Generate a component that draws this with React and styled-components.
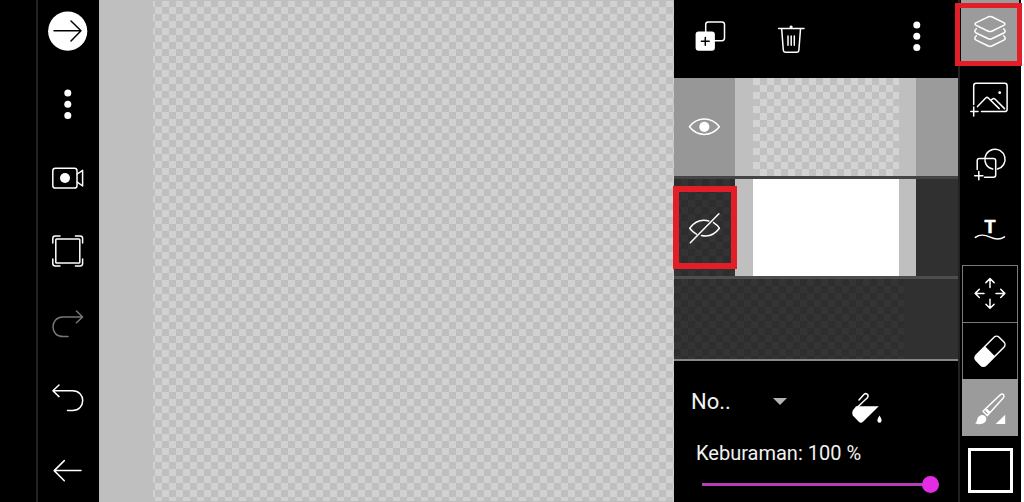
import React, { useState } from "react";
import styled, { createGlobalStyle, css } from "styled-components";

const Color = {
  black: "#000000",
  line: "#222222",
  grey: "#bfbfbf",
  active: "#9b9b9b",
  layer: "#303030",
  red: "#e41e26",
  track: "#b63db6",
  thumb: "#e32ce3",
};

// two tone transparency pattern, 7px squares
const checker = (light, dark) => css`
  background-color: ${dark};
  background-image: conic-gradient(
    ${light} 25%,
    ${dark} 0 50%,
    ${light} 0 75%,
    ${dark} 0
  );
  background-size: 14px 14px;
`;

// styles
const GlobalStyle = createGlobalStyle`
  * {
    box-sizing: border-box;
  }
  body {
    margin: 0;
    background: ${Color.black};
    font-family: Roboto, "Liberation Sans", sans-serif;
  }
`;
const Container = styled.div`
  display: flex;
  min-height: 100vh;
  background-color: ${Color.black};
  color: #f2f2f2;
`;
const LeftBar = styled.nav`
  display: flex;
  flex-direction: column;
  align-items: center;
  justify-content: space-between;
  width: 63px;
  margin-left: 36px;
  padding: 11px 1px 11px 0;
  border-left: 2px solid ${Color.line};
`;
const IconButton = styled.button`
  display: flex;
  align-items: center;
  justify-content: center;
  width: 40px;
  height: 40px;
  padding: 0;
  border: none;
  background: none;
  color: ${(props) => (props.disabled ? "#777777" : "#ffffff")};
`;
const Svg = styled.svg`
  display: block;
  flex: none;
  width: 40px;
  height: 40px;
  fill: none;
  stroke: currentColor;
  stroke-width: 1.5;
  stroke-linecap: round;
  stroke-linejoin: round;
`;
const Workspace = styled.main`
  display: flex;
  flex: 1;
  min-width: 0;
  padding: 1px 0 1px 54px;
  background-color: ${Color.grey};
`;
const Canvas = styled.div`
  flex: 1;
  ${checker("#d1d1d1", Color.grey)}
  background-position: 2px -1px;
`;
const Panel = styled.section`
  display: flex;
  flex-direction: column;
  width: 284px;
`;
const PanelHeader = styled.header`
  display: flex;
  align-items: center;
  gap: 41px;
  height: 78px;
  padding: 0 21px 6px 16px;
`;
const MoreButton = styled(IconButton)`
  margin-left: auto;
`;
const Layer = styled.div`
  display: grid;
  grid-template-columns: 61px 181px 1fr;
  height: ${(props) => (props.$active ? "101px" : "100px")};
  border-bottom: 3px solid ${(props) => (props.$active ? "#444444" : "#4d4d4d")};
  background-color: ${(props) => (props.$active ? Color.active : Color.layer)};
`;
const EyeButton = styled.button`
  position: relative;
  display: flex;
  align-items: center;
  justify-content: center;
  padding: 0 1px 0 0;
  border: none;
  color: #ffffff;
  ${(props) =>
    props.$active
      ? css`
          background-color: #979797;
        `
      : checker("#333333", "#2d2d2d")}
`;
const Thumbnail = styled.div`
  display: flex;
  padding: 0 17px 0 18px;
  background-color: ${Color.grey};
`;
const Paper = styled.div`
  flex: 1;
  ${(props) =>
    props.$filled
      ? css`
          background-color: #ffffff;
        `
      : css`
          ${checker("#d3d3d3", "#c0c0c0")}
          background-position: 7px 0;
        `}
`;
const EmptyArea = styled.div`
  flex: 1;
  display: flex;
  min-height: 82px;
  border-bottom: 2px solid #868686;
  background-color: ${Color.layer};
`;
const EmptyPattern = styled.div`
  width: 230px;
  ${checker("#343434", "#2e2e2e")}
`;
const Controls = styled.div`
  height: 141px;
  padding: 20px 19px 0 17px;
`;
const BlendRow = styled.div`
  display: flex;
  align-items: flex-start;
  gap: 60px;
`;
const BlendBox = styled.div`
  display: grid;
  align-items: center;
  width: 96px;
  height: 40px;
`;
const BlendSelect = styled.select`
  grid-area: 1 / 1;
  width: 100%;
  height: 40px;
  padding: 0;
  border: none;
  background: none;
  color: inherit;
  font-family: inherit;
  font-size: 22px;
  appearance: none;
`;
const Arrow = styled.svg`
  grid-area: 1 / 1;
  justify-self: end;
  width: 14px;
  height: 7px;
  fill: #b4b4b4;
  pointer-events: none;
`;
const FillButton = styled(IconButton)`
  height: 54px;
`;
const OpacityLabel = styled.label`
  display: block;
  padding-left: 5px;
  font-size: 20px;
  line-height: 36px;
`;
const Slider = styled.input`
  display: block;
  width: calc(100% - 11px);
  height: 18px;
  margin: 4px 0 0 11px;
  background: linear-gradient(${Color.track}, ${Color.track}) center / 100% 3px
    no-repeat;
  appearance: none;
  &::-webkit-slider-thumb {
    width: 17px;
    height: 17px;
    border-radius: 50%;
    background-color: ${Color.thumb};
    appearance: none;
  }
`;
const RightBar = styled.aside`
  display: flex;
  flex-direction: column;
  align-items: center;
  width: 66px;
  padding-right: 1px;
  border-left: 2px solid ${Color.line};
  border-right: 3px solid #ffffff;
`;
const ToolButton = styled(IconButton)`
  position: relative;
  width: ${(props) => (props.$active ? "58px" : "56px")};
  height: 66px;
  background-color: ${(props) => (props.$active ? Color.active : "transparent")};
`;
const BrushGroup = styled.div`
  width: 56px;
  margin-top: 1px;
`;
const BrushButton = styled(IconButton)`
  width: 100%;
  height: 57px;
  border: ${(props) => (props.$active ? "none" : "1px solid #7a7a7a")};
  border-bottom: none;
  background-color: ${(props) => (props.$active ? Color.active : "transparent")};
`;
const Swatch = styled.button`
  width: 45px;
  height: 45px;
  margin-top: 12px;
  border: 3px solid #ffffff;
  background-color: ${Color.black};
`;
const Highlight = styled.span`
  position: absolute;
  inset: ${(props) => props.$inset};
  z-index: 1;
  border: ${(props) => props.$size} solid ${Color.red};
  pointer-events: none;
`;

function Icon(props) {
  return (
    <Svg viewBox="0 0 40 40" aria-hidden="true">
      {props.children}
    </Svg>
  );
}

function DotsIcon() {
  return (
    <Icon>
      <g fill="currentColor" stroke="none">
        <circle cx="19.8" cy="9" r="3.5" />
        <circle cx="19.8" cy="20.2" r="3.5" />
        <circle cx="19.8" cy="31.4" r="3.5" />
      </g>
    </Icon>
  );
}

function LeftTools() {
  return (
    <LeftBar>
      <IconButton aria-label="Lanjut">
        <Icon>
          <circle cx="19.7" cy="20.2" r="19.6" fill="#fff" stroke="none" />
          <path d="M6 19.7H33M23 10L33 19.7L23 30" stroke="#000" />
        </Icon>
      </IconButton>
      <IconButton aria-label="Menu">
        <DotsIcon />
      </IconButton>
      <IconButton aria-label="Rekam">
        <Icon>
          <rect x="4.8" y="10.2" width="24.2" height="19.8" rx="2.6" />
          <circle cx="17" cy="20" r="5" fill="currentColor" stroke="none" />
          <path d="M29.3 16L34.6 12.4V28L29.3 24.2" />
        </Icon>
      </IconButton>
      <IconButton aria-label="Layar penuh">
        <Icon>
          <rect x="7.8" y="8" width="24" height="24" rx="0.8" />
          <path d="M4.8 12V7.4Q4.8 5 7.2 5H12M27.4 5H32.2Q34.6 5 34.6 7.4V12M34.6 28V32.6Q34.6 35 32.2 35H27.4M12 35H7.2Q4.8 35 4.8 32.6V28" />
        </Icon>
      </IconButton>
      <IconButton aria-label="Ulangi" disabled>
        <Icon>
          <path d="M28.5 7L34.6 13L28.5 18.8M34.6 13H15C8.5 13 5 17.5 5 22.8S8.5 32.6 15 32.6H20" />
        </Icon>
      </IconButton>
      <IconButton aria-label="Urungkan">
        <Icon>
          <path d="M11 7L4.9 12.8L11 18.6M4.9 12.8H24.6C31 12.8 34.7 17.2 34.7 22.5S31 32.4 24.6 32.4H19.5" />
        </Icon>
      </IconButton>
      <IconButton aria-label="Kembali">
        <Icon>
          <path d="M33 19.6H6.2M16.3 9.6L6.2 19.6L16.3 29.8" />
        </Icon>
      </IconButton>
    </LeftBar>
  );
}

function LayerPanel() {
  const [opacity, setOpacity] = useState(100);

  return (
    <Panel>
      <PanelHeader>
        <IconButton aria-label="Tambah lapisan">
          <Icon>
            <rect x="15.7" y="5.9" width="18.8" height="18.8" rx="2.6" />
            <rect
              x="5.6"
              y="15.4"
              width="19.3"
              height="19.3"
              rx="3"
              fill="#fff"
              stroke="none"
            />
            <path d="M15.3 21.4V29.2M11.4 25.3H19.2" stroke="#000" />
          </Icon>
        </IconButton>
        <IconButton aria-label="Hapus lapisan">
          <Icon>
            <path d="M7.6 12.6H33M10.7 13L12.3 34Q12.5 36.3 14.8 36.3H25.6Q27.7 36.3 27.9 34L29.5 13" />
            <path d="M17 20V29.2M20.2 20V29.2M23.3 20V29.2" />
            <path
              d="M18.7 12.4V10.4Q18.7 9.6 20.1 9.6T21.5 10.4V12.4Z"
              fill="#fff"
              stroke="none"
            />
          </Icon>
        </IconButton>
        <MoreButton aria-label="Opsi lapisan">
          <DotsIcon />
        </MoreButton>
      </PanelHeader>

      <Layer $active>
        <EyeButton $active aria-label="Sembunyikan">
          <Icon>
            <path d="M5.4 19.8C9.5 14.6 14.5 12.1 20.3 12.1S31.2 14.6 35.4 19.8C31.2 25 26 27.4 20.3 27.4S9.5 25 5.4 19.8Z" />
            <circle cx="20.3" cy="19.8" r="5.1" fill="#fff" stroke="none" />
          </Icon>
        </EyeButton>
        <Thumbnail>
          <Paper />
        </Thumbnail>
      </Layer>
      <Layer>
        <EyeButton aria-label="Tampilkan">
          <Icon>
            <path d="M24.8 12.9C16.8 11 10.3 13.8 5.7 20.2C7.8 23 10 24.9 12.5 26.1M29.5 14.6Q33 16.6 35.4 20.2C30.8 26.4 24.6 29 17.5 27.4" />
            <path d="M6.3 34.7L34.9 5.8" />
          </Icon>
          <Highlight $inset="7px -2px 7px -1px" $size="6px" />
        </EyeButton>
        <Thumbnail>
          <Paper $filled />
        </Thumbnail>
      </Layer>
      <EmptyArea>
        <EmptyPattern />
      </EmptyArea>

      <Controls>
        <BlendRow>
          <BlendBox>
            <BlendSelect aria-label="Mode campuran">
              <option>No..</option>
            </BlendSelect>
            <Arrow viewBox="0 0 14 7">
              <path d="M0 0H14L7 7Z" />
            </Arrow>
          </BlendBox>
          <FillButton aria-label="Isi">
            <Icon>
              <path d="M12 12L16.4 6.9C18.7 4.2 22.7 6.6 20.4 9.7L7.4 22" />
              <path
                d="M9.1 18.3H31.8L16 33.8Q13.9 35.6 11.8 33.8L5.8 27.5Q4.5 25.5 5.6 22.7Z"
                fill="#fff"
                stroke="none"
              />
              <path
                d="M32.5 27.6C33.9 30 34.6 31 34.6 32.4A2.1 2.3 0 0 1 30.4 32.4C30.4 31 31.2 30 32.5 27.6Z"
                fill="#fff"
                stroke="none"
              />
            </Icon>
          </FillButton>
        </BlendRow>
        <OpacityLabel htmlFor="opacity">Keburaman: {opacity} %</OpacityLabel>
        <Slider
          id="opacity"
          type="range"
          min="0"
          max="100"
          value={opacity}
          onChange={(e) => setOpacity(Number(e.target.value))}
        />
      </Controls>
    </Panel>
  );
}

function RightTools() {
  return (
    <RightBar>
      <ToolButton $active aria-label="Lapisan">
        <Icon>
          <path d="M18.3 3.8Q20 3 21.7 3.8L33.8 9.7Q36.2 11 33.8 12.4L21.7 18.2Q20 19 18.3 18.2L6.2 12.4Q3.8 11 6.2 9.7Z" />
          <path d="M6.4 15.8Q3.3 18.4 6.2 20L18.3 25.8Q20 26.6 21.7 25.8L33.8 20Q36.7 18.4 33.6 15.8" />
          <path d="M6.4 22.8Q3.3 25.5 6.2 27.1L18.3 33Q20 33.8 21.7 33L33.8 27.1Q36.7 25.5 33.6 22.8" />
        </Icon>
        <Highlight $inset="3px -3px 0 -6px" $size="5px" />
      </ToolButton>
      <ToolButton aria-label="Tambah foto">
        <Icon>
          <path d="M3.7 25.5V6.7Q3.7 4.3 6.1 4.3H34.7Q37.1 4.3 37.1 6.7V30.2Q37.1 32.6 34.7 32.6H11.5" />
          <path d="M3.7 27.9V36.9M0.8 32.4H8" />
          <path d="M7.5 27.6L15.7 19Q17 17.8 18.3 19L29.2 29.6M20.8 21.3L22.6 19.9Q23.8 19 25.2 20.2L34.5 29.6" />
          <circle cx="29.7" cy="13.7" r="1.4" fill="#fff" stroke="none" />
        </Icon>
      </ToolButton>
      <ToolButton aria-label="Tambah bentuk">
        <Icon>
          <path d="M15.1 16.5A10.1 10.1 0 1 1 27.5 24.1M22.7 24.1A10.1 10.1 0 0 1 15.1 16.5" />
          <path d="M7.2 24.4V15.8Q7.2 13.6 9.4 13.6H23.5Q25.7 13.6 25.7 15.8V30Q25.7 32.2 23.5 32.2H14.5" />
          <path d="M8.8 26.6V34.8M4.7 30.7H12.9" />
        </Icon>
      </ToolButton>
      <ToolButton aria-label="Teks">
        <Icon>
          <text
            x="20"
            y="22"
            textAnchor="middle"
            fill="#fff"
            strokeWidth="0.6"
            fontFamily="Liberation Sans, sans-serif"
            fontSize="18"
            fontWeight="bold"
          >
            T
          </text>
          <path d="M5.3 26.4C10.5 22.6 15 23.8 20.2 26.1S29.5 29.2 34.5 25.8" />
        </Icon>
      </ToolButton>

      <BrushGroup>
        <BrushButton aria-label="Pindah">
          <Icon>
            <path d="M20 13.4V4.5M15.9 8.6L20 4.5L24.1 8.6M20 25.3V34.3M15.9 30.2L20 34.3L24.1 30.2M14 19.4H5.2M9.3 15.3L5.2 19.4L9.3 23.5M26 19.4H34.8M30.7 15.3L34.8 19.4L30.7 23.5" />
          </Icon>
        </BrushButton>
        <BrushButton aria-label="Penghapus">
          <Icon>
            <g transform="rotate(-45 20 20.2)">
              <rect x="3.7" y="13.2" width="32.6" height="14" rx="3.6" />
              <path
                d="M20 13.2V27.2H7.3Q3.7 27.2 3.7 23.6V16.8Q3.7 13.2 7.3 13.2Z"
                fill="#fff"
                stroke="none"
              />
            </g>
          </Icon>
        </BrushButton>
        <BrushButton $active aria-label="Kuas">
          <Icon>
            <path d="M13 23.2L30.3 6.8Q32.3 5.2 33.6 6.8Q34.7 8.2 33.2 10L17.4 27.6ZM16.2 22.6L18.1 24.5M15.8 20.5L19.9 24.6" />
            <path
              d="M5 35.3C7.6 34.3 6.5 30.9 8.5 28.8C10.5 26.6 13.4 26.4 15.2 28.2C17 30.1 16.7 33 14.5 34.6C12 36.5 8.3 36.6 5 35.3Z"
              fill="#fff"
              stroke="none"
            />
            <path d="M35.2 26.8V36H25.6Z" fill="#fff" stroke="none" />
          </Icon>
        </BrushButton>
      </BrushGroup>
      <Swatch aria-label="Warna" />
    </RightBar>
  );
}

function App() {
  return (
    <Container>
      <GlobalStyle />
      <LeftTools />
      <Workspace>
        <Canvas />
      </Workspace>
      <LayerPanel />
      <RightTools />
    </Container>
  );
}

export default App;
